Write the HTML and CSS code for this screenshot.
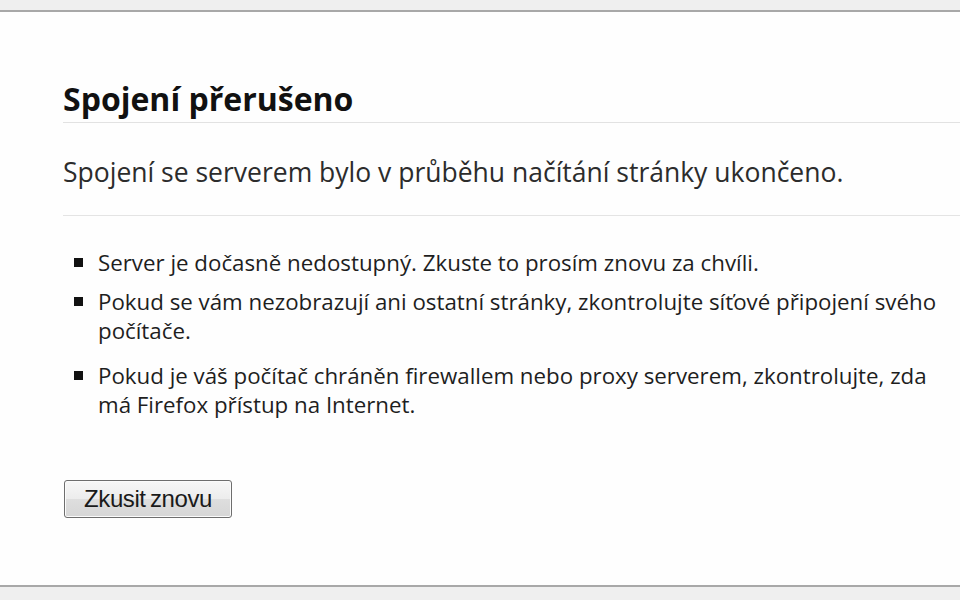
FILE: index.html
```html
<!DOCTYPE html>
<html lang="cs">
<head>
<meta charset="utf-8">
<link rel="stylesheet" href="styles.css">
</head>
<body>
<div class="frame">
  <div class="chrome-top"></div>
  <main class="page">
    <div class="error">
      <h1 class="title">Spojení přerušeno</h1>
      <p class="short-desc">Spojení se serverem bylo v průběhu načítání stránky ukončeno.</p>
      <ul class="long-desc">
        <li class="item">Server je dočasně nedostupný. Zkuste to prosím znovu za chvíli.</li>
        <li class="item item-wide-gap">Pokud se vám nezobrazují ani ostatní stránky, zkontrolujte síťové připojení svého počítače.</li>
        <li class="item">Pokud je váš počítač chráněn firewallem nebo proxy serverem, zkontrolujte, zda má Firefox přístup na Internet.</li>
      </ul>
      <button class="retry" type="button">Zkusit znovu</button>
    </div>
  </main>
  <div class="chrome-bottom"></div>
</div>
</body>
</html>
```

FILE: styles.css
```css
html, body {
  margin: 0;
  padding: 0;
  height: 100%;
  overflow: hidden;
  background: #ffffff;
}

.frame {
  display: flex;
  flex-direction: column;
  height: 600px;
  width: 960px;
  overflow: hidden;
}

.chrome-top {
  height: 10px;
  background: #efefef;
  border-bottom: 2px solid #a8a8a8;
  flex: none;
}

.chrome-bottom {
  height: 13px;
  background: #efefef;
  border-top: 2px solid #a8a8a8;
  flex: none;
}

.page {
  flex: 1;
  background: #fefefe;
  padding-left: 63px;
  overflow: hidden;
}

.error {
  width: 1000px;
  padding-top: 67px;
  font-family: "Open Sans", "Noto Sans", sans-serif;
  color: #222;
}

.title {
  margin: 0;
  font-size: 32px;
  font-weight: 700;
  line-height: 40px;
  color: #111;
  border-bottom: 1px solid #e2e2e2;
  padding-bottom: 3px;
}

.short-desc {
  margin: 0;
  padding: 31px 0 25px;
  font-size: 26.5px;
  line-height: 36px;
  color: #2c2c2c;
  border-bottom: 1px solid #e4e4e4;
}

.long-desc {
  margin: 0;
  padding: 32px 0 0 35px;
  width: 852px;
  list-style: none;
  font-size: 22.3px;
  line-height: 29px;
  color: #1e1e1e;
}

.item {
  position: relative;
  margin-bottom: 10px;
}

.item-wide-gap {
  margin-bottom: 16px;
}

.item:last-child {
  margin-bottom: 0;
}

.item::before {
  content: "";
  position: absolute;
  left: -24px;
  top: 10px;
  width: 9px;
  height: 9px;
  background: #111;
}

.retry {
  display: block;
  margin-top: 61px;
  margin-left: 1px;
  width: 168px;
  height: 38px;
  padding: 0;
  font-family: "Liberation Sans", Arial, sans-serif;
  font-size: 24px;
  color: #1a1a1a;
  letter-spacing: -0.4px;
  word-spacing: -2px;
  border: 1px solid #6e6e6e;
  border-radius: 3px;
  background: linear-gradient(#f7f7f7, #ececec 50%, #dedede 51%, #d6d6d6);
  box-shadow: inset 0 0 0 1px #fbfbfb;
}
```
